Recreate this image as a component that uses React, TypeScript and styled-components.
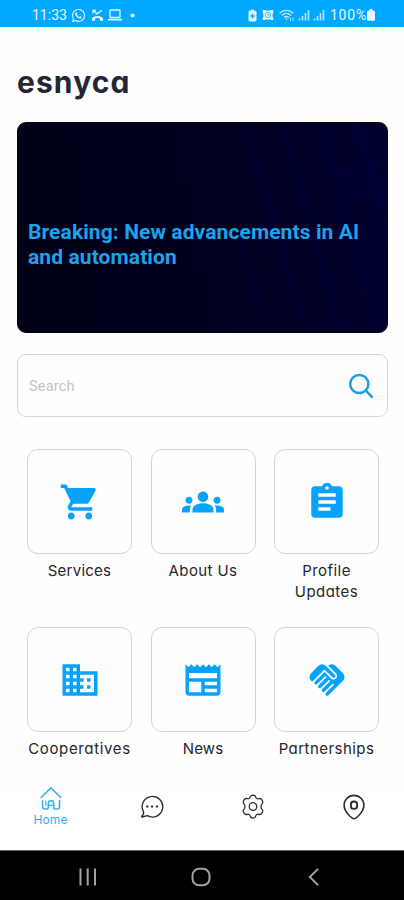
import React from "react";
import styled, { createGlobalStyle } from "styled-components";
import {
  MdShoppingCart,
  MdGroups,
  MdAssignment,
  MdBusiness,
  MdNewspaper,
  MdHandshake,
} from "react-icons/md";
import { FaWhatsapp } from "react-icons/fa";

const GlobalStyle = createGlobalStyle`
  * { box-sizing: border-box; }
  html, body { margin: 0; padding: 0; background: #fefefe; }
  button { appearance: none; border: 0; background: none; padding: 0; font: inherit; color: inherit; }
`;

const Screen = styled.div`
  width: 404px;
  height: 900px;
  display: flex;
  flex-direction: column;
  overflow: hidden;
  background: #fefefe;
  font-family: Inter, sans-serif;
  font-feature-settings: "cv11";
`;

const StatusBar = styled.header`
  flex: none;
  height: 27px;
  padding: 3px 29px 0 32px;
  display: flex;
  align-items: center;
  justify-content: space-between;
  background: #00a8ff;
  color: #e4f6ff;
  font-size: 14px;
`;

const StatusGroup = styled.div<{ $gap: number }>`
  display: flex;
  align-items: center;
  gap: ${(p) => p.$gap}px;
  svg { display: block; }
`;

const StatusText = styled.span<{ $spacing: number }>`
  font-family: Roboto, sans-serif;
  font-size: 14px;
  line-height: 16px;
  letter-spacing: ${(p) => p.$spacing}px;
`;

const Content = styled.main`
  flex: none;
  height: 759px;
  padding: 35px 16px 0 17px;
`;

const Brand = styled.h1`
  margin: 0;
  height: 60px;
  font-size: 30px;
  line-height: 40px;
  font-weight: 700;
  letter-spacing: 1.1px;
  color: #25253a;
`;

const Hero = styled.section`
  height: 211px;
  border-radius: 9px;
  border: 1px solid #04040c;
  padding: 97px 9px 0 10px;
  background:
    repeating-linear-gradient(74deg, transparent 0 22px, rgba(0, 0, 100, 0.16) 29px, transparent 36px) right / 150px 100% no-repeat,
    linear-gradient(80deg, #000016 0%, #00001f 55%, #00002f 100%);
`;

const Headline = styled.h2`
  margin: 0;
  font-family: Roboto, sans-serif;
  font-size: 21px;
  line-height: 25px;
  font-weight: 700;
  letter-spacing: 0.1px;
  white-space: nowrap;
  color: #1ba3ec;
`;

const SearchBox = styled.div`
  margin-top: 21px;
  height: 63px;
  border: 1px solid #d5d5d8;
  border-radius: 9px;
  display: flex;
  align-items: center;
  justify-content: space-between;
  padding: 0 13px 0 11px;
`;

const Placeholder = styled.span`
  padding-top: 2px;
  font-family: Roboto, sans-serif;
  font-size: 14.5px;
  letter-spacing: 0.2px;
  color: #c3c4ca;
`;

const Grid = styled.div`
  margin-top: 32px;
  padding: 0 8px 0 10px;
  display: grid;
  grid-template-columns: repeat(3, 105px);
  column-gap: 18.5px;
  grid-auto-rows: 178px;
`;

const Tile = styled.button`
  display: flex;
  flex-direction: column;
  align-items: center;
`;

const TileCard = styled.span`
  width: 105px;
  height: 105px;
  flex: none;
  border: 1px solid #d5d5d8;
  border-radius: 11px;
  display: flex;
  align-items: center;
  justify-content: center;
  color: #07a3fa;
`;

const TileLabel = styled.span<{ $spacing: number }>`
  margin-top: 6px;
  font-size: 15px;
  line-height: 21px;
  letter-spacing: ${(p) => p.$spacing}px;
  white-space: pre;
  text-align: center;
  color: #25252d;
`;

const TabBar = styled.nav`
  flex: none;
  height: 64px;
  display: grid;
  grid-template-columns: repeat(4, 1fr);
  background: #fff;
  border-top: 1px solid #fbfbfb;
`;

const Tab = styled.button<{ $active?: boolean }>`
  display: flex;
  flex-direction: column;
  align-items: center;
  padding-top: ${(p) => (p.$active ? 0 : 7)}px;
  color: ${(p) => (p.$active ? "#32aef5" : "#2b2b31")};
  font-size: 12px;
  line-height: 16px;
  letter-spacing: 0.1px;
  svg { display: block; }
`;

const SystemBar = styled.footer`
  flex: none;
  height: 50px;
  background: #000;
  border-top: 1px solid #666;
  display: flex;
  align-items: center;
  justify-content: space-between;
  padding: 3px 81px 0 77px;
  color: #a3a3a3;
`;

const MissedCall = () => (
  <svg width="13" height="13" viewBox="0 0 13 13" fill="none" stroke="currentColor">
    <path d="M2 4.500V1.300h3M2.300 1.500l3.700 3.300 4.800-3.600" strokeWidth="1.300" />
    <path d="M.9 11.700V9.200C4 6.200 9 6.200 12.100 9.200v2.500H8.900V9.400c-1.500-.6-3.300-.6-4.800 0v2.300z" fill="currentColor" stroke="none" />
  </svg>
);
const Laptop = () => (
  <svg width="14" height="12" viewBox="0 0 14 12" fill="none" stroke="currentColor" strokeWidth="1.3">
    <rect x="2" y="1" width="10" height="7.5" rx=".7" />
    <path d="M0 10.6h14" strokeWidth="1.7" />
  </svg>
);
const Dot = () => (
  <svg width="10" height="5" viewBox="0 0 10 5"><circle cx="5.500" cy="2.500" r="2.100" fill="currentColor" /></svg>
);
const BatterySaver = () => (
  <svg width="9" height="13" viewBox="0 0 9 13">
    <path d="M3 .5h3v1.2h1.2c.8 0 1.3.6 1.3 1.3v8c0 .8-.5 1.4-1.3 1.4H1.8C1 12.4.5 11.8.5 11V3c0-.7.5-1.300 1.300-1.300H3z" fill="currentColor" />
    <path d="M4.500 4.700v4.800M2.300 7h4.400" stroke="#1ba9f4" strokeWidth="1.400" />
  </svg>
);
const Alarm = () => (
  <svg width="12" height="12" viewBox="0 0 12 12">
    <path d="M.7 1h3l.8.7h3L8.300 1h3v3l-.7 1v3l.7.8V11H9.500l-1-.6h-5l-1 .6H.7V8.800l.7-.8V5l-.7-1z" fill="currentColor" />
    <circle cx="6" cy="6" r="2.700" fill="none" stroke="#27aef8" strokeWidth=".8" />
    <path d="M6 4.300V6.300h1.500" fill="none" stroke="#27aef8" strokeWidth=".8" />
  </svg>
);
const Wifi = () => (
  <svg width="16" height="13" viewBox="0 0 16 13" fill="none" stroke="currentColor" strokeWidth="1.300" opacity=".85">
    <path d="M.7 4.200C4.800.5 10.200.5 14.300 4.200M2.800 6.400c2.900-2.500 6.500-2.500 9.400 0M5 8.500c1.600-1.300 3.400-1.300 5 0" />
    <path d="M6.200 9.500h2.600l-1.300 1.700z" fill="currentColor" stroke="none" />
    <path d="M11.500 8.500v3.500M14 8.500v3.500" strokeWidth=".8" />
  </svg>
);
const Signal = () => (
  <svg width="12" height="12" viewBox="0 0 12 12" stroke="currentColor" strokeWidth="1.700" opacity=".75">
    <path d="M1.500 11.500V9.500M4.500 11.500V7M7.500 11.500V4M10.500 11.500V1" />
  </svg>
);
const Battery = () => (
  <svg width="8" height="12" viewBox="0 0 8 12">
    <path d="M2.600 0h2.800v1.400h.8C7.300 1.400 8 2 8 3v7.500c0 .8-.5 1.300-1.300 1.300H1.300C.5 11.800 0 11.300 0 10.500V3c0-1 .7-1.600 1.800-1.600h.8z" fill="currentColor" />
  </svg>
);
const Search = () => (
  <svg width="26" height="26" viewBox="0 0 26 26" fill="none" stroke="#1b9fe4" strokeWidth="2.500" strokeLinecap="round">
    <circle cx="11.300" cy="11" r="9.100" />
    <path d="M17.900 17.700l6 6.100" />
  </svg>
);
const HomeIcon = () => (
  <svg width="24" height="25" viewBox="0 0 24 25" fill="none" stroke="currentColor" strokeWidth="1.500" strokeLinecap="round" strokeLinejoin="round">
    <path d="M2.200 10.500L12 .9l9.800 9.600" />
    <path d="M3.500 13.500v6c0 1.500.8 2.500 2.300 2.500h1.700c1.200 0 1.800-.6 1.800-1.800v-3.700c0-1.700 1-2.700 2.700-2.700s2.700 1 2.700 2.700v3.700c0 1.200.6 1.800 1.800 1.800h1.700c1.500 0 2.300-1 2.300-2.500v-6" />
    <path d="M6.800 14v4.500M9.300 18.300h5.400" strokeWidth="1.200" />
  </svg>
);
const Chat = () => (
  <svg width="24" height="25" viewBox="0 0 24 25" fill="none" stroke="currentColor" strokeWidth="1.350" strokeLinejoin="round">
    <path d="M3.500 17.800A10.300 10.300 0 1 1 7.400 21.700L2.300 23c-.6.100-.8-.2-.5-.7l1.800-2.200z" />
    <path d="M6.200 12.500h2.200M11 12.500h2.200M15.800 12.500H18" strokeWidth="2" />
  </svg>
);
const Gear = () => (
  <svg width="24" height="25" viewBox="0 0 24 25" fill="none" stroke="currentColor" strokeWidth="1.250" strokeLinejoin="round">
    <path d="M9.200 3.200C9.500 1.800 10.300 1 12 1s2.500.8 2.800 2.200c.2 1.200 1.500 1.900 2.600 1.500 1.500-.5 2.700-.2 3.700 1.400s.9 2.900-.3 4c-1 1-1 3.800 0 4.800 1.200 1.100 1.300 2.400.3 4s-2.200 1.900-3.700 1.400c-1.100-.4-2.400.3-2.600 1.500-.3 1.400-1.100 2.200-2.800 2.200s-2.500-.8-2.800-2.200c-.2-1.200-1.500-1.900-2.600-1.500-1.500.5-2.700.2-3.700-1.400s-.9-2.900.3-4c1-1 1-3.800 0-4.800-1.200-1.100-1.300-2.400-.3-4s2.200-1.900 3.700-1.400c1.100.4 2.400-.3 2.600-1.500z" />
    <circle cx="12" cy="12.500" r="3.800" />
  </svg>
);
const Pin = () => (
  <svg width="24" height="26" viewBox="0 0 24 26" fill="none" stroke="currentColor" strokeWidth="1.600">
    <path d="M12 24.700C10.700 24.700 2.100 18.600 2.100 11.300a9.900 9.900 0 0 1 19.800 0c0 7.300-8.600 13.400-9.900 13.400z" />
    <rect x="8.900" y="7.500" width="6.200" height="7.400" rx="2.900" strokeWidth="1.900" />
  </svg>
);
const Recents = () => (
  <svg width="20" height="18" viewBox="0 0 20 18" stroke="currentColor" strokeWidth="2"><path d="M3.500 .5v17M10.700 .5v17M18 .5v17" /></svg>
);
const HomeKey = () => (
  <svg width="20" height="20" viewBox="0 0 20 20" fill="none" stroke="currentColor" strokeWidth="2"><rect x="1.500" y="1.800" width="17" height="16.400" rx="6.500" /></svg>
);
const Back = () => (
  <svg width="18" height="18" viewBox="0 0 18 18" fill="none" stroke="currentColor" strokeWidth="1.900"><path d="M13 .8L4.800 9l8.200 8.200" /></svg>
);

const tiles = [
  { label: "Services", icon: MdShoppingCart, spacing: 0.25 },
  { label: "About Us", icon: MdGroups, spacing: 0.4 },
  { label: "Profile\nUpdates", icon: MdAssignment, spacing: 0.45 },
  { label: "Cooperatives", icon: MdBusiness, spacing: 0.65 },
  { label: "News", icon: MdNewspaper, spacing: 0.1 },
  { label: "Partnerships", icon: MdHandshake, spacing: 0.45 },
];

export default function App() {
  return (
    <Screen>
      <GlobalStyle />
      <StatusBar>
        <StatusGroup $gap={4.5}>
          <StatusText $spacing={0}>11:33</StatusText>
          <FaWhatsapp size={15} />
          <MissedCall />
          <Laptop />
          <Dot />
        </StatusGroup>
        <StatusGroup $gap={3}>
          <StatusGroup $gap={5}>
            <BatterySaver />
            <Alarm />
            <Wifi />
          </StatusGroup>
          <Signal />
          <Signal />
          <StatusGroup $gap={0}>
            <StatusText $spacing={0.8}>&#8202;100%</StatusText>
            <Battery />
          </StatusGroup>
        </StatusGroup>
      </StatusBar>
      <Content>
        <Brand>esnyca</Brand>
        <Hero>
          <Headline>Breaking: New advancements in AI<br />and automation</Headline>
        </Hero>
        <SearchBox>
          <Placeholder>Search</Placeholder>
          <Search />
        </SearchBox>
        <Grid>
          {tiles.map(({ label, icon: Icon, spacing }) => (
            <Tile key={label}>
              <TileCard><Icon size={42} /></TileCard>
              <TileLabel $spacing={spacing}>{label}</TileLabel>
            </Tile>
          ))}
        </Grid>
      </Content>
      <TabBar>
        <Tab $active><HomeIcon />Home</Tab>
        <Tab aria-label="Messages"><Chat /></Tab>
        <Tab aria-label="Settings"><Gear /></Tab>
        <Tab aria-label="Location"><Pin /></Tab>
      </TabBar>
      <SystemBar>
        <Recents />
        <HomeKey />
        <Back />
      </SystemBar>
    </Screen>
  );
}
